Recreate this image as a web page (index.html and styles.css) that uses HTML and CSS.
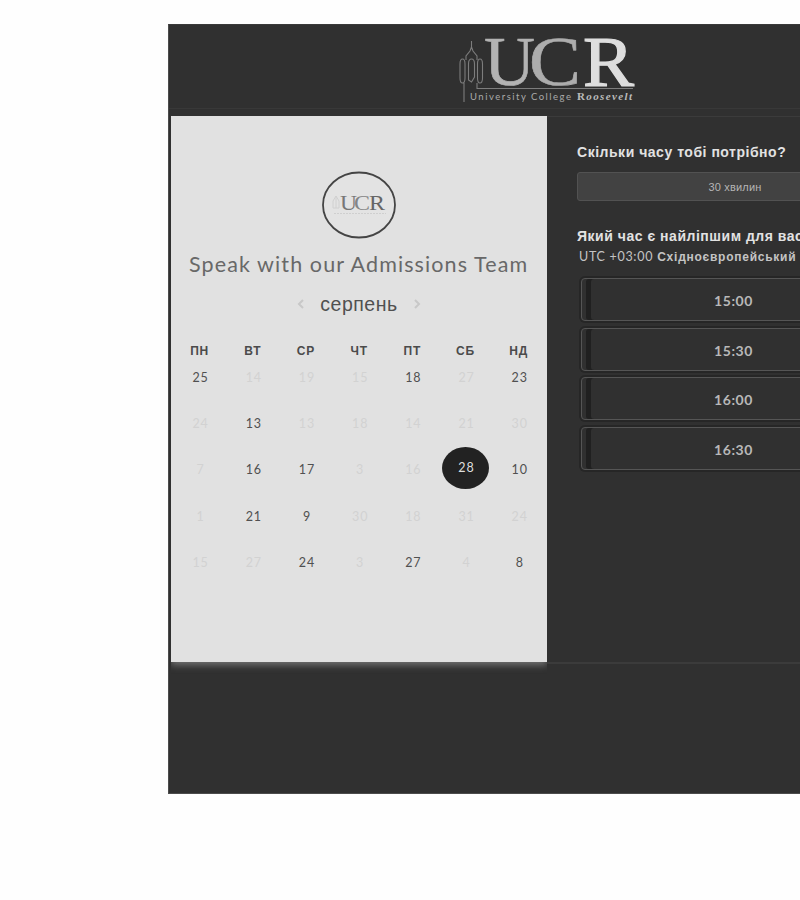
FILE: index.html
```html
<!DOCTYPE html>
<html lang="uk">
<head>
<meta charset="utf-8">
<title>University College Roosevelt</title>
<link rel="stylesheet" href="styles.css">
</head>
<body>
<div class="frame">
  <header class="header">
    <svg class="logo" width="180" height="70" viewBox="0 0 180 70" role="img">
      <g fill="none" stroke="#7d7d7d" stroke-width="1.100">
        <path d="M6 66V47M2 28Q2 23 4.500 23Q7 23 7 28V42Q7 47 4.500 47Q2 47 2 42ZM10.500 44V28Q10.500 23 13.500 23Q16.500 23 16.500 28V41L13.500 46ZM19.500 28Q19.500 23 22 23Q24.500 23 24.500 28V42Q24.500 47 22 47Q19.500 47 19.500 42ZM13.500 5V13M13.500 11L12 15L8 20V24M13.500 11L15 15L19 20V24"/>
        <path d="M19 47V52.500H175"/>
      </g>
      <g class="logo-serif">
        <text x="26" y="49" font-size="70" textLength="51" lengthAdjust="spacingAndGlyphs" fill="#b3b3b3" stroke="#b3b3b3" stroke-width="0.600">U</text>
        <text x="71" y="49" font-size="69" textLength="52" lengthAdjust="spacingAndGlyphs" fill="#adadad" stroke="#adadad" stroke-width="0.600">C</text>
        <text x="125" y="49.500" font-size="71" textLength="51" lengthAdjust="spacingAndGlyphs" fill="#dedede" stroke="#dedede" stroke-width="1.200">R</text>
      </g>
      <text class="logo-sans" x="12" y="64" font-size="9.500" textLength="101" fill="#aaa">University College</text>
      <text class="logo-name" x="119" y="64" font-size="11" textLength="55" fill="#bbb"><tspan font-style="normal">R</tspan>oosevelt</text>
    </svg>
  </header>
  <main class="main">
    <section class="calendar">
      <svg class="avatar" width="76" height="68" viewBox="0 0 76 68" role="img">
        <ellipse cx="38" cy="34" rx="36" ry="32.500" fill="#e3e3e3" stroke="#444" stroke-width="1.800"/>
        <path d="M12 37V30L15 25L18 30V37ZM15 25V37" fill="none" stroke="#d0d0d0"/>
        <g class="logo-serif">
          <text x="19" y="39" font-size="22" textLength="17" lengthAdjust="spacingAndGlyphs" fill="#777">U</text>
          <text x="33" y="39" font-size="22" textLength="16" lengthAdjust="spacingAndGlyphs" fill="#858585">C</text>
          <text x="48" y="39" font-size="22" textLength="16" lengthAdjust="spacingAndGlyphs" fill="#666">R</text>
        </g>
        <path d="M13 42.500H65" stroke="#cfcfcf" stroke-dasharray="2 1"/>
      </svg>
      <h1 class="title">Speak with our Admissions Team</h1>
      <div class="month">
        <svg width="8" height="10" viewBox="0 0 8 10"><path d="M6 1L2 5L6 9" /></svg>
        <span>серпень</span>
        <svg width="8" height="10" viewBox="0 0 8 10"><path d="M2 1L6 5L2 9" /></svg>
      </div>
      <div class="weekdays"><span>ПН</span><span>ВТ</span><span>СР</span><span>ЧТ</span><span>ПТ</span><span>СБ</span><span>НД</span></div>
      <div class="days">
        <span class="on">25</span><span>14</span><span>19</span><span>15</span><span class="on">18</span><span>27</span><span class="on">23</span>
        <span>24</span><span class="on">13</span><span>13</span><span>18</span><span>14</span><span>21</span><span>30</span>
        <span>7</span><span class="on">16</span><span class="on">17</span><span>3</span><span>16</span><span class="selected">28</span><span class="on">10</span>
        <span>1</span><span class="on">21</span><span class="on">9</span><span>30</span><span>18</span><span>31</span><span>24</span>
        <span>15</span><span>27</span><span class="on">24</span><span>3</span><span class="on">27</span><span>4</span><span class="on">8</span>
      </div>
    </section>
    <section class="booking">
      <h2 class="question">Скільки часу тобі потрібно?</h2>
      <div class="duration">30 хвилин</div>
      <h2 class="question second">Який час є найліпшим для вас?</h2>
      <p class="zone"><span>UTC +03:00</span> <b>Східноєвропейський час</b></p>
      <div class="slots">
        <div class="slot">15:00</div>
        <div class="slot">15:30</div>
        <div class="slot">16:00</div>
        <div class="slot">16:30</div>
      </div>
    </section>
  </main>
</div>
</body>
</html>
```
FILE: styles.css
```css
* { box-sizing: border-box; }
body {
  margin: 0;
  padding: 24px 0 0 168px;
  height: 900px;
  background: #fefefe;
  overflow: hidden;
  font-family: "Liberation Sans", sans-serif;
}
h1, h2, p { margin: 0; font-weight: normal; white-space: nowrap; }
.frame {
  height: 770px;
  overflow: hidden;
  background: #303030;
  border: 1px solid #4c4c4c;
  border-top-color: #3a3a3a;
  border-right: 0;
}
.header {
  height: 84px;
  padding: 11px 0 0 289px;
  border-bottom: 1px solid #383838;
}
.logo { display: block; }
.logo-serif { font-family: "Liberation Serif", serif; }
.logo-sans { font-family: Lato, sans-serif; }
.logo-name { font-family: "Liberation Serif", serif; font-weight: bold; font-style: italic; }
.main {
  display: flex;
  height: 555px;
  padding: 7px 0 0 2px;
}
.calendar {
  flex: none;
  width: 376px;
  height: 546px;
  padding-top: 55px;
  background: #e1e1e1;
  box-shadow: 0 3px 7px #747474;
  clip-path: inset(0 0 -12px 0);
}
.avatar { display: block; margin-left: 150px; }
.title {
  margin: 10px 0 0 18px;
  font: 400 21.5px/30px Lato, sans-serif;
  letter-spacing: 1.1px;
  color: #686868;
}
.month {
  display: flex;
  align-items: center;
  justify-content: center;
  gap: 15px;
  height: 26px;
  margin-top: 12px;
  font-size: 19.5px;
  color: #505050;
}
.month svg { fill: none; stroke: #c8c8c8; stroke-width: 2; }
.month span { letter-spacing: 0.5px; }
.weekdays, .days {
  display: grid;
  grid-template-columns: repeat(7, 53.2px);
  margin-left: 2px;
  text-align: center;
}
.weekdays {
  margin-top: 24px;
  font-weight: bold;
  font-size: 12px;
  line-height: 20px;
  letter-spacing: 0.8px;
  color: #4b4b4b;
}
.days {
  grid-auto-rows: 46.2px;
  margin-top: -6px;
  font: 12.5px/46px Lato, sans-serif;
  letter-spacing: 0.9px;
  color: #d2d2d2;
}
.days span { padding-left: 2px; }
.days .on { color: #505050; }
.days .selected {
  width: 47px;
  height: 42px;
  margin: 0 0 0 3px;
  border-radius: 50%;
  background: #222;
  line-height: 41px;
  color: #dedede;
}
.booking {
  flex: none;
  width: 380px;
  padding: 25px 0 0 30px;
  border: solid #3b3b3b;
  border-width: 1px 0 2px;
}
.question {
  font-weight: bold;
  font-size: 14px;
  line-height: 20px;
  letter-spacing: 0.52px;
  color: #e2e2e2;
}
.duration {
  width: 316px;
  height: 29px;
  margin-top: 10px;
  border: 1px solid #525252;
  border-radius: 3px;
  background: #424242;
  font-size: 11px;
  line-height: 28px;
  letter-spacing: 0.2px;
  text-align: center;
  color: #b5b5b5;
}
.second { margin-top: 25px; }
.zone {
  padding-left: 2px;
  font-size: 12px;
  line-height: 23px;
  letter-spacing: 0.75px;
  color: #c4c4c4;
}
.zone span { font: 12.5px Lato, sans-serif; letter-spacing: 0.7px; }
.slots {
  display: grid;
  grid-auto-rows: 43px;
  row-gap: 6.6px;
  width: 305px;
  margin: 9px 0 0 4px;
}
.slot {
  border: 1px solid #555;
  border-radius: 4px;
  box-shadow: inset 4px 0 0 #303030, inset 9px 0 0 #202020, 0 0 0 2px #262626;
  font: bold 14px/43px Lato, sans-serif;
  letter-spacing: 0.6px;
  text-align: center;
  color: #b8b8b8;
}
```
